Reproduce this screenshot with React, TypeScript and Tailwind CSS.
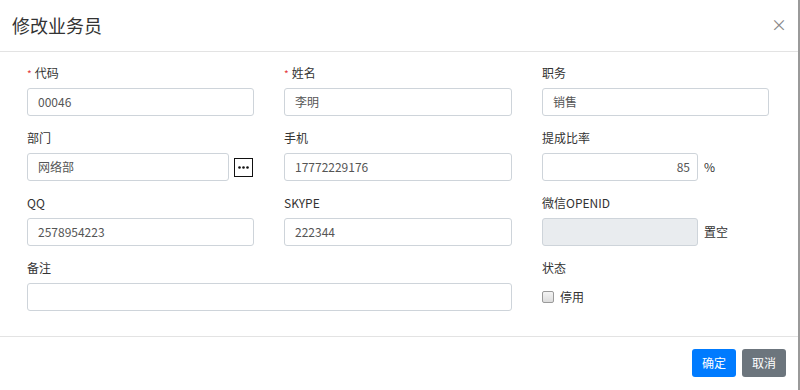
const font = "font-['Microsoft_YaHei','Noto_Sans_CJK_SC','Liberation_Sans',sans-serif]"

function Label({ children, required }: { children: React.ReactNode; required?: boolean }) {
  return (
    <div className="mb-[5px] flex h-[20px] items-center text-[12px] text-[#333]">
      {required && <span className="mr-[3px] text-[10px] text-[#e4393c]">*</span>}
      {children}
    </div>
  )
}

function Input({
  value,
  className,
  disabled,
}: {
  value?: string
  className?: string
  disabled?: boolean
}) {
  return (
    <div
      className={
        "flex h-[28px] items-center rounded-[3px] border border-[#ced4da] px-[10px] text-[12px] text-[#555] " +
        (disabled ? "bg-[#e9ecef] " : "bg-white ") +
        (className ?? "")
      }
    >
      {value}
    </div>
  )
}

export default function App() {
  return (
    <div className={`${font} h-[390px] w-[800px] overflow-hidden border-r-[2px] border-r-[#9a9a9a] bg-white`}>
      {/* header */}
      <div className="flex h-[52px] items-center justify-between border-b border-[#e3e3e3] pl-[12px] pr-[11px]">
        <div className="text-[18px] text-[#333]">修改业务员</div>
        <div className="pb-[4px] text-[16px] leading-none text-[#888]">×</div>
      </div>

      {/* body */}
      <div className="h-[285px] border-b border-[#e3e3e3] pl-[27px] pt-[11px]">
        <div className="grid grid-cols-[227px_228px_227px] gap-x-[30px] gap-y-[12px]">
          <div>
            <Label required>代码</Label>
            <Input value="00046" />
          </div>
          <div>
            <Label required>姓名</Label>
            <Input value="李明" />
          </div>
          <div>
            <Label>职务</Label>
            <Input value="销售" />
          </div>

          <div>
            <Label>部门</Label>
            <div className="flex items-center">
              <Input value="网络部" className="w-[202px]" />
              <div className="ml-[5px] flex h-[19px] w-[19px] items-center justify-center border-[1.5px] border-[#111]">
                <svg width="11" height="3" viewBox="0 0 11 3">
                  <circle cx="1.5" cy="1.5" r="1.3" fill="#111" />
                  <circle cx="5.5" cy="1.5" r="1.3" fill="#111" />
                  <circle cx="9.5" cy="1.5" r="1.3" fill="#111" />
                </svg>
              </div>
            </div>
          </div>
          <div>
            <Label>手机</Label>
            <Input value="17772229176" />
          </div>
          <div>
            <Label>提成比率</Label>
            <div className="flex items-center">
              <Input value="85" className="w-[156px] justify-end pr-[7px]" />
              <span className="ml-[6px] text-[12px] text-[#333]">%</span>
            </div>
          </div>

          <div>
            <Label>QQ</Label>
            <Input value="2578954223" />
          </div>
          <div>
            <Label>SKYPE</Label>
            <Input value="222344" />
          </div>
          <div>
            <Label>微信OPENID</Label>
            <div className="flex items-center">
              <Input disabled className="w-[156px]" />
              <span className="ml-[6px] text-[12px] text-[#333]">置空</span>
            </div>
          </div>

          <div className="col-span-2">
            <Label>备注</Label>
            <Input />
          </div>
          <div>
            <Label>状态</Label>
            <div className="flex h-[28px] items-center">
              <span className="h-[12px] w-[12px] rounded-[2px] border border-[#9a9a9a] bg-gradient-to-b from-[#f4f4f4] to-[#dcdcdc]" />
              <span className="ml-[6px] text-[12px] text-[#333]">停用</span>
            </div>
          </div>
        </div>
      </div>

      {/* footer */}
      <div className="flex h-[52px] items-center justify-end gap-[6px] pr-[12px]">
        <button className="h-[28px] w-[44px] rounded-[3px] bg-[#007bff] text-[12px] text-white">确定</button>
        <button className="h-[28px] w-[44px] rounded-[3px] bg-[#6c757d] text-[12px] text-white">取消</button>
      </div>
    </div>
  )
}
